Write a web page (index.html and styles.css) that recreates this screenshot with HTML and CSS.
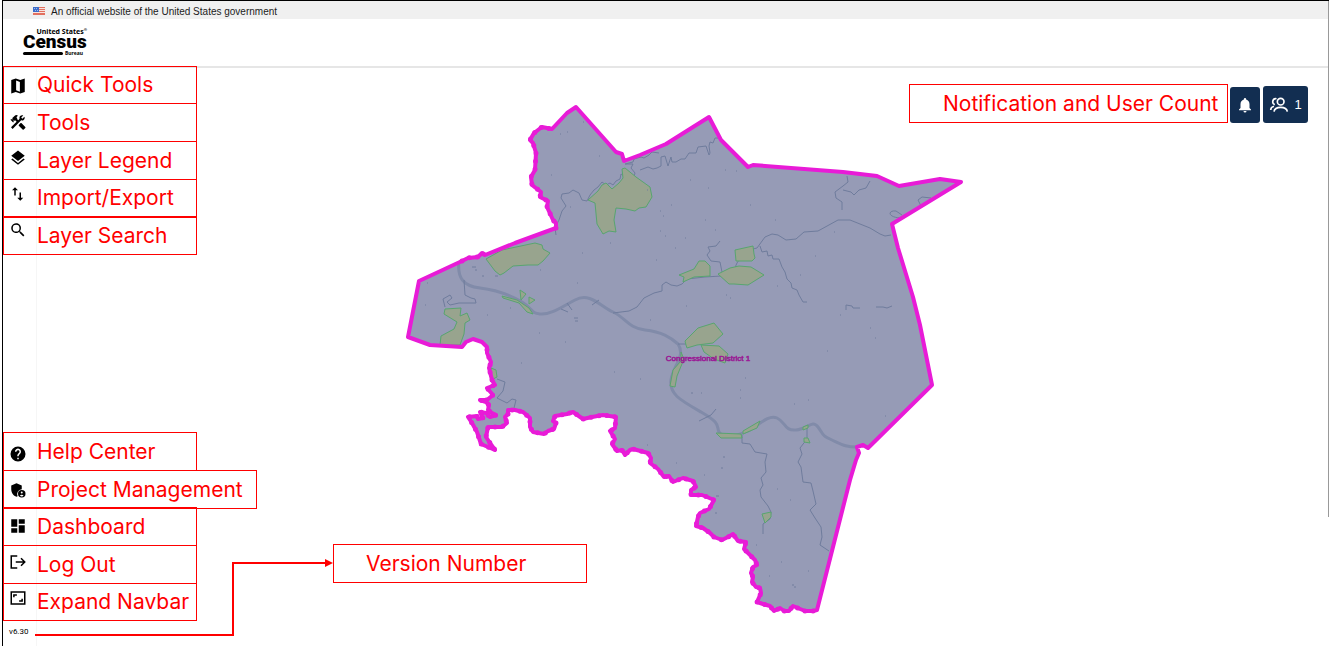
FILE: index.html
```html
<!DOCTYPE html>
<html lang="en">
<head>
<meta charset="utf-8">
<title>Congressional District 1 - United States Census Bureau</title>
<link rel="stylesheet" href="styles.css">
</head>
<body>
<div class="banner">
  <svg class="flag" viewBox="0 0 12 8" aria-hidden="true">
    <path fill="#f7e4e0" d="M0 0h12v8H0z"/>
    <path fill="#e2705f" d="M0 0h12v1H0zM0 2h12v1H0zM0 4h12v1H0zM0 6h12v2H0z"/>
    <path fill="#3c6cc8" d="M0 0h6v5H0z"/>
    <path fill="#9db8ec" d="M1 1h1v1H1zM3 1h1v1H3zM2 3h1v1H2zM4 3h1v1H4z"/>
  </svg>
  <span>An official website of the United States government</span>
</div>
<header class="header">
  <a class="logo" href="#" aria-label="United States Census Bureau">
    <span class="logo-top">United States<sup>®</sup></span>
    <span class="logo-name">Census</span>
    <span class="logo-base"><span class="logo-bar"></span><span class="logo-end">Bureau</span></span>
  </a>
</header>
<main class="stage">
  <section class="map" aria-label="District map">
    <svg class="district" viewBox="402 100 564 520" role="img" aria-label="Congressional District 1">
      <defs>
        <path id="edge" d="M576 107L616 152 622 154 624 161 640 155 666 144 709 117 721 140 748 167 753 165 843 172 877 176 899 186 940 179 961 182 892 224 898 248 913 297 920 325 932 385 868 448 863 445 857 447 859 453 856 460 850 480 817 610 813 611 805 611 793 606 789 611 784 611 780 608 774 611 770 606 763 604 757 602 761 593 760 588 756 587 752 582 753 577 751 573 753 567 757 565 755 560 748 553 744 549 746 542 738 541 733 534 728 537 722 540 714 537 710 533 703 528 696 526 698 517 700 513 709 509 714 500 707 497 702 495 691 495 691 490 696 487 693 481 683 478 673 482 669 476 664 477 658 469 650 463 651 458 648 453 633 449 630 450 625 455 622 450 617 451 612 444 615 439 610 431 615 428 616 417 603 415 592 417 583 419 573 412 567 414 555 416 553 421 556 423 554 429 548 431 544 434 533 432 530 427 530 418 523 412 515 410 508 410 508 414 505 417 507 423 502 427 488 427 486 437 490 443 495 450 481 444 477 432 472 423 468 417 477 416 478 419 483 418 480 412 486 413 490 417 496 415 492 413 488 410 489 405 486 402 480 400 487 400 493 395 487 388 495 385 492 380 489 368 491 362 487 353 487 347 482 342 473 339 466 342 462 347 430 345 408 337 419 281 462 261 468 258 478 257 482 253 485 255 515 243 556 228 556 223 553 220 547 207 548 201 540 197 541 192 532 185 531 177 535 170 536 153 533 143 530 140 534 133 542 127 552 129 567 113Z"/>
        <clipPath id="inside"><use href="#edge"/></clipPath>
      </defs>
      <use href="#edge" class="land"/>
      <g clip-path="url(#inside)">
        <path class="river" d="M459 260C457 278 463 286 480 288S510 295 522 302 530 313 540 314 560 308 575 300 600 306 613 312 628 328 645 330 670 337 678 344C686 356 673 366 671 380S680 400 701 412 716 426 719 432 738 436 748 431 768 414 777 418 784 431 796 430 812 419 818 427 821 435 832 440 846 447 857 447"/>
        <path class="stream" d="M556 235l-1-7 4-8 3-9 4-5-5-8 1-4 7-1 4-3 6 3 3 7 5 1 3-6 4-5 4-3 4-5 4 3 4-2 3 2 3-4 4-2 1-5 5 3 4 0 3 3 2-7-4-5 2-4-8 0 8-2 1-3 7-2 3 1 5-3 3-3 7 1M640 170l8-3 5 2 4-1 4-2 0-9 4-1 3 10 3-9 1 5 4 0 5-3 4 0 4-6 7 0 2-6 8-1 3 9 1-2-1-7 1-4 3 1 2-5 4 0 7-3 5 3"/>
        <path class="stream" d="M613 313l8-1 8-1 8-4 7-9 10-5 8-2 0-6 4-3 5 3 6 1 5-2 5-5 18-2 16-1 12-4 4-9 8-12 12-3 8-11 7-3 6 1 8 5 10-1 8-7 14-1 20-11 12 0 20 8 10 6 5 2 6-1M720 241l-4 5-8 1 2 4-3 4 4 6 9 1 2 10 2 4M760 246l2 6 5-1 1 5 4-1 1 4 6 0 3 8 3 5 2 7 4 4 1 5 5 2 2 5 4 7 4 0M842 210l0-8-6-4-1-6 8-6 5-4-1-6M843 190l8 2 3 3 5-5 7-2 4-7M921 206l-3-6 4-3 9 1M900 218c-13-1-12-8-4-7l6 4M846 310l0-5 6 1 1 2 7 0M876 307l7 0 4 1 5-2"/>
        <path class="stream" d="M445 307l-2-8 7-4 2 3-5 4 3 3 9-2 17 0-1-4-4-1-6-3-1-15M497 379l8 3-2 9-6 7 10 5 5-4 4 1-2 8M678 344h8M699 421l12-6 5-6M561 309l7 3M592 305l7-5M572 310l-5-7"/>
        <path class="stream" d="M742 435l0 8 8 1 5 8 12 2-2 8 1 10-5 6 2 7-3 5 1 7 7 9 3 6-1 7-7 5 0 10M807 425v14l-7 9 2 6-4 8 3 5 2 15 8 1 2 8 3 13-6 6 5 8 6 9 1 10-2 8 9 6"/>
        <path class="park" d="M622 169l3-1 11 9 14 10 2 10-6 10-7 1-4 3-9-2-10-1-2 12 2 12-7-1-6 3-6-10-2-21-7-3 10-9 4-6 4-2 6 6 7-6 4-5-1-9M486 259l16-9 33-7 7 2 1 4 7 4-7 8-5 4-10 0-15 1-9 7-4 2-5-4zM679 275l15-6 5-8 6 0 5 5 0 10-16 1-11 5 1-5zM735 250l18-4 1 8 1 4-3 3-16 0zM718 274l12-6 9-2 12 1 13 8-8 5-8 5-14-1-5 0zM685 341l13-13 16-5 9 11-10 9-16 2-10 3-1-3zM701 345l18 1 9 8-3 9-11-4-10-7z"/>
        <path class="park" d="M440 345l1-9 13-7 3-7-13-8 1-5 16-1-1 8 7-3 3 7-5 3-1 11-4 11zM491 368l5 2 1 7-6 3zM502 296l15 4 12 8 4 6-6-2-8-9-16-5zM520 290l6 4-5 6zM529 297l6 3-6 4zM681 352l3 7-7 17-2 11-5-1 3-16 8-9zM716 433l25 1 1 4-21 0zM743 431l17-10-3 7-14 6zM803 427l5-2 0 3-5 2zM804 438l4 0 2 5-6-1zM762 514l9-2 0 5-6 6z"/>
        <path class="speck" d="M560 134h1M567 132h1M583 122h1M599 156h1M551 175h1M570 207h1M582 253h1M610 243h1M577 283h1M540 270h1M482 276h2M495 276h3M472 267h4M475 270h2M427 283h1M425 305h1M660 231h1M665 236h1M675 248h1M685 238h1M725 170h1M708 188h1M705 220h1M775 220h1M750 205h1M834 232h1M815 256h1M800 275h1M777 286h1M730 298h1M840 315h1M870 328h1M875 338h1M827 351h1M745 378h1M740 390h1M740 398h1M808 400h1M794 404h1M691 393h2M701 393h1M726 295h1M686 306h1M650 320h1M574 318h4M575 321h3M487 315h1M510 308h1M484 350h1M565 342h1M614 372h1M640 379h1M539 333h1M521 363h1M647 445h1M676 463h1M704 475h1M723 457h2M721 468h2M777 489h1M790 500h1M716 496h3M715 513h2M756 545h1M781 562h1M808 571h1M792 585h2M794 587h2M769 576h1M885 416h1M660 211h1M663 216h1M671 205h1M656 260h1M647 190h1M690 180h1M715 230h1M736 171h1"/>
      </g>
      <use href="#edge" class="border"/>
      <path class="shore" d="M813 611L805 611 793 606 789 611 784 611 780 608 774 611 770 606 763 604 757 602 761 593 760 588 756 587 752 582 753 577 751 573 753 567 757 565 755 560 748 553 744 549 746 542 738 541 733 534 728 537 722 540 714 537 710 533 703 528 696 526 698 517 700 513 709 509 714 500 707 497 702 495 691 495 691 490 696 487 693 481 683 478 673 482 669 476 664 477 658 469 650 463 651 458 648 453 633 449 630 450 625 455 622 450 617 451 612 444 615 439 610 431 615 428 616 417 603 415 592 417 583 419 573 412 567 414 555 416 553 421 556 423 554 429 548 431 544 434 533 432 530 427 530 418 523 412 515 410 508 410 508 414 505 417 507 423 502 427 488 427 486 437 490 443 495 450 481 444 477 432 472 423 468 417 477 416 478 419 483 418 480 412 486 413 490 417 496 415 492 413 488 410 489 405 486 402 480 400 487 400 493 395 487 388 495 385 492 380 489 368 491 362 487 353 487 347M462 261L468 258 478 257 482 253 485 255M556 228L556 223 553 220 547 207 548 201 540 197 541 192 532 185 531 177 535 170 536 153 533 143 530 140 534 133 542 127 552 129"/>
      <text class="district-name" x="708" y="361">Congressional District 1</text>
    </svg>
  </section>

  <nav class="sidebar" aria-label="Main">
    <div class="sidebar-group">
      <button class="tool" aria-label="Quick Tools"><svg viewBox="0 0 24 24"><path fill-rule="evenodd" d="M3 4l6-2 6 2 6-2v18l-6 2-6-2-6 2zM9.500 4.500v13l5 2v-13z"/></svg></button>
      <button class="tool" aria-label="Tools"><svg viewBox="0 0 24 24"><path d="M21.700 18.600l-5.200-5.200h-1l-2.500 2.500v1l5.200 5.200c.4.4 1 .4 1.400 0l2.100-2.100c.4-.4.4-1 0-1.400zM17.400 10c1.900 0 3.500-1.600 3.500-3.500 0-.6-.2-1.100-.4-1.600l-2.700 2.700-1.500-1.500L19 3.400c-.5-.2-1-.4-1.600-.4-1.900 0-3.500 1.600-3.500 3.500 0 .4.100.8.200 1.200l-1.800 1.800-1.800-1.800.7-.7-1.400-1.400 2.100-2.100c-1.200-1.200-3.100-1.200-4.200 0L4.100 7l1.400 1.400H2.700l-.7.700 3.500 3.500.7-.7V9.100l1.400 1.400.7-.7 1.800 1.800L2.700 19l2.100 2.200L16.200 9.800c.4.100.8.200 1.200.2z"/></svg></button>
      <button class="tool" aria-label="Layer Legend"><svg viewBox="0 0 24 24"><path d="M12 18.500l-7.400-5.700L3 14l9 7 9-7-1.600-1.300zM12 16l9-7-9-7-9 7z"/></svg></button>
      <button class="tool" aria-label="Import/Export"><svg viewBox="0 0 24 24"><path d="M8 3L4 7h3v7h2V7h3zm8 14v-7h-2v7h-3l4 4 4-4z"/></svg></button>
      <button class="tool" aria-label="Layer Search"><svg viewBox="0 0 24 24"><path d="M15.500 14h-.8l-.3-.3A6.500 6.500 0 1 0 13.700 14.400l.3.300v.8l5 5 1.500-1.500zm-6 0a4.500 4.500 0 1 1 0-9 4.500 4.500 0 0 1 0 9z"/></svg></button>
    </div>
    <div class="sidebar-group">
      <button class="tool" aria-label="Help Center"><svg viewBox="0 0 24 24"><path d="M12 2a10 10 0 1 0 0 20 10 10 0 0 0 0-20zm1 17h-2v-2h2zm2.100-7.700l-.9.900c-.7.700-1.200 1.300-1.200 2.800h-2v-.5c0-1.100.4-2.100 1.200-2.800l1.200-1.300A2 2 0 1 0 10 9H8a4 4 0 1 1 7.100 2.300z"/></svg></button>
      <button class="tool" aria-label="Project Management"><svg viewBox="0 0 24 24"><path d="M10 3L3 6v5c0 5 3 8.600 7 10 .6-.2 1-.4 1.500-.6A6.500 6.500 0 0 1 17 11V6z"/><path fill-rule="evenodd" d="M17 12a5 5 0 1 0 0 10 5 5 0 0 0 0-10zm0 2a1.300 1.300 0 1 1 0 2.600 1.300 1.300 0 0 1 0-2.600zm0 6.500c-1 0-1.900-.5-2.400-1.300.8-1.200 4-1.200 4.800 0-.5.800-1.400 1.300-2.400 1.300z"/></svg></button>
      <button class="tool" aria-label="Dashboard"><svg viewBox="0 0 24 24"><path d="M3 13h8V3H3zm0 8h8v-6H3zm10 0h8V11h-8zm0-18v6h8V3z"/></svg></button>
      <button class="tool" aria-label="Log Out"><svg viewBox="0 0 24 24"><path class="line" d="M11 4H3v16h8M9 12h12M16 7l5 5-5 5"/></svg></button>
      <button class="tool" aria-label="Expand Navbar"><svg viewBox="0 0 24 24"><path class="line" d="M3 4h18v16H3zM6.500 11V8h4M17.500 13v3h-4"/></svg></button>
      <span class="version">v6.30</span>
    </div>
  </nav>

  <div class="labels">
    <ul class="label-list">
      <li class="callout first">Quick Tools</li>
      <li class="callout">Tools</li>
      <li class="callout">Layer Legend</li>
      <li class="callout short">Import/Export</li>
      <li class="callout double">Layer Search</li>
    </ul>
    <ul class="label-list">
      <li class="callout">Help Center</li>
      <li class="callout wide">Project Management</li>
      <li class="callout over">Dashboard</li>
      <li class="callout">Log Out</li>
      <li class="callout short">Expand Navbar</li>
    </ul>
  </div>

  <div class="status">
    <div class="callout status-label">Notification and User Count</div>
    <button class="chip bell" aria-label="Notifications"><svg viewBox="0 0 24 24"><path d="M12 22a2 2 0 0 0 2-2h-4a2 2 0 0 0 2 2zm6-6v-5c0-3.100-1.600-5.600-4.500-6.300V4a1.500 1.500 0 0 0-3 0v.7C7.600 5.400 6 7.900 6 11v5l-2 2v1h16v-1z"/></svg></button>
    <button class="chip users" aria-label="Users online: 1"><svg viewBox="0 0 24 24"><g class="line"><circle cx="14" cy="8" r="4"/><path d="M6 20c1-7 15-7 16 0M9 4.500c-5-1-6 6-2 7M2 18c0-3 2-4 4-4.500"/></g></svg><span>1</span></button>
  </div>

  <div class="version-note">
    <svg class="connector" viewBox="0 0 298 77" aria-hidden="true"><path class="wire" d="M0 76H198V4H292"/><path class="arrow" d="M290 0l8 4-8 4z"/></svg>
    <div class="callout version-label">Version Number</div>
  </div>
</main>
</body>
</html>
```

FILE: styles.css
```css
* {
  box-sizing: border-box;
}

body {
  position: relative;
  margin: 0 0 0 2px;
  min-height: 100vh;
  display: flex;
  flex-direction: column;
  background: #fff;
  border-top: 1px solid #000;
  border-left: 1px solid #000;
  font-family: "Liberation Sans", Arial, sans-serif;
  color: #1b1b1b;
}

body::after {
  content: "";
  position: absolute;
  top: 0;
  right: 0;
  width: 1px;
  height: 80%;
  background: #999;
}

button {
  padding: 0;
  border: 0;
  background: none;
  font: inherit;
  color: inherit;
}

.line {
  fill: none;
  stroke: currentColor;
  stroke-width: 2;
}

.banner {
  display: flex;
  align-items: center;
  gap: 6px;
  height: 18px;
  padding: 2px 30px 0;
  background: #f0f0f0;
  font-size: 10px;
}

.flag {
  width: 12px;
  height: 8px;
}

.header {
  display: flex;
  align-items: flex-start;
  height: 49px;
  padding: 9px 20px 0;
  border-bottom: 2px solid #e6e6e6;
}

.logo {
  display: flex;
  flex-direction: column;
  width: 64px;
  color: #000;
  text-decoration: none;
  font-family: "Noto Sans", sans-serif;
  font-weight: 700;
}

.logo-top {
  align-self: flex-end;
  font-size: 7px;
  line-height: 8px;
  white-space: nowrap;
}

.logo-top sup {
  font-size: 4px;
  line-height: 1px;
}

.logo-name {
  font-family: Roboto, sans-serif;
  font-size: 19px;
  font-weight: 900;
  line-height: 12px;
}

.logo-base {
  display: flex;
  align-items: center;
  gap: 2px;
  margin-top: 2px;
  font-size: 5px;
  line-height: 6px;
}

.logo-bar {
  width: 40px;
  height: 3px;
  border-radius: 2px;
  background: #000;
}

.stage {
  position: relative;
  flex: 1;
  display: grid;
  grid-template: 1fr / 34px 1fr;
}

.map {
  grid-area: 1 / 2;
  display: flex;
  justify-content: center;
  align-items: flex-start;
  padding: 32px 0 0 2px;
}

.district {
  width: 564px;
  height: 520px;
}

.land {
  fill: #969bb6;
}

.border,
.shore {
  fill: none;
  stroke: #e81bd7;
  stroke-width: 4;
  stroke-linejoin: round;
  stroke-linecap: round;
}

.shore {
  stroke-width: 5;
  stroke-dasharray: 0 8;
}

.river {
  fill: none;
  stroke: #818ba9;
  stroke-width: 3;
}

.stream {
  fill: none;
  stroke: #6f7c9c;
  stroke-width: 1;
}

.park {
  fill: #98a48e;
  stroke: #58a56f;
  stroke-width: 1;
}

.speck {
  fill: none;
  stroke: #717d9c;
  stroke-width: 1;
}

.district-name {
  font-size: 8px;
  text-anchor: middle;
  fill: #5a1460;
  stroke: #a3189c;
  stroke-width: 0.5;
}

.sidebar {
  grid-area: 1 / 1;
  display: flex;
  flex-direction: column;
  justify-content: space-between;
  border-right: 1px solid #f6f6f6;
}

.sidebar-group {
  display: flex;
  flex-direction: column;
  color: #000;
}

.tool {
  display: flex;
  align-items: center;
  height: 36px;
  padding-left: 6px;
}

.tool svg {
  width: 18px;
  height: 18px;
  fill: currentColor;
}

.tool .line {
  fill: none;
}

.version {
  height: 30px;
  padding-left: 6px;
  font-family: Roboto, sans-serif;
  font-size: 8px;
  line-height: 32px;
}

.callout {
  display: flex;
  align-items: center;
  height: 39px;
  padding: 0 32px 2px;
  border: 1px solid red;
  color: red;
  font-family: Inter, sans-serif;
  font-size: 21px;
  white-space: nowrap;
}

.labels {
  position: absolute;
  top: -2px;
  bottom: 25px;
  left: 0;
  display: flex;
  flex-direction: column;
  justify-content: space-between;
  pointer-events: none;
}

.label-list {
  margin: 0;
  padding: 0;
  list-style: none;
}

.label-list .callout {
  width: 194px;
  padding: 0 0 1px 33px;
}

.label-list .callout + .callout {
  margin-top: -1px;
}

.label-list .first,
.label-list .short,
.label-list .double {
  height: 38px;
}

.label-list .callout.double {
  margin-top: 0;
}

.label-list .callout.wide {
  width: 254px;
}

.label-list .callout.over {
  margin-top: -2px;
}

.status {
  position: absolute;
  top: 16px;
  right: 21px;
  display: flex;
  align-items: flex-end;
}

.status-label {
  width: 319px;
  padding: 0 0 1px 33px;
}

.chip {
  display: flex;
  align-items: center;
  justify-content: center;
  border-radius: 3px;
  background: #122e51;
  color: #fff;
  font-size: 13px;
}

.chip svg {
  fill: currentColor;
}

.bell {
  width: 30px;
  height: 36px;
  margin: 0 3px 0 2px;
}

.bell svg {
  width: 18px;
  height: 18px;
}

.users {
  gap: 5px;
  width: 45px;
  height: 37px;
}

.users svg {
  width: 20px;
  height: 20px;
}

.version-note {
  position: absolute;
  left: 32px;
  bottom: 10px;
  display: flex;
  align-items: flex-start;
}

.connector {
  width: 298px;
  height: 77px;
  margin-top: 15px;
}

.wire {
  fill: none;
  stroke: red;
  stroke-width: 2;
}

.arrow {
  fill: red;
}

.version-label {
  width: 254px;
  padding-bottom: 0;
}
```
